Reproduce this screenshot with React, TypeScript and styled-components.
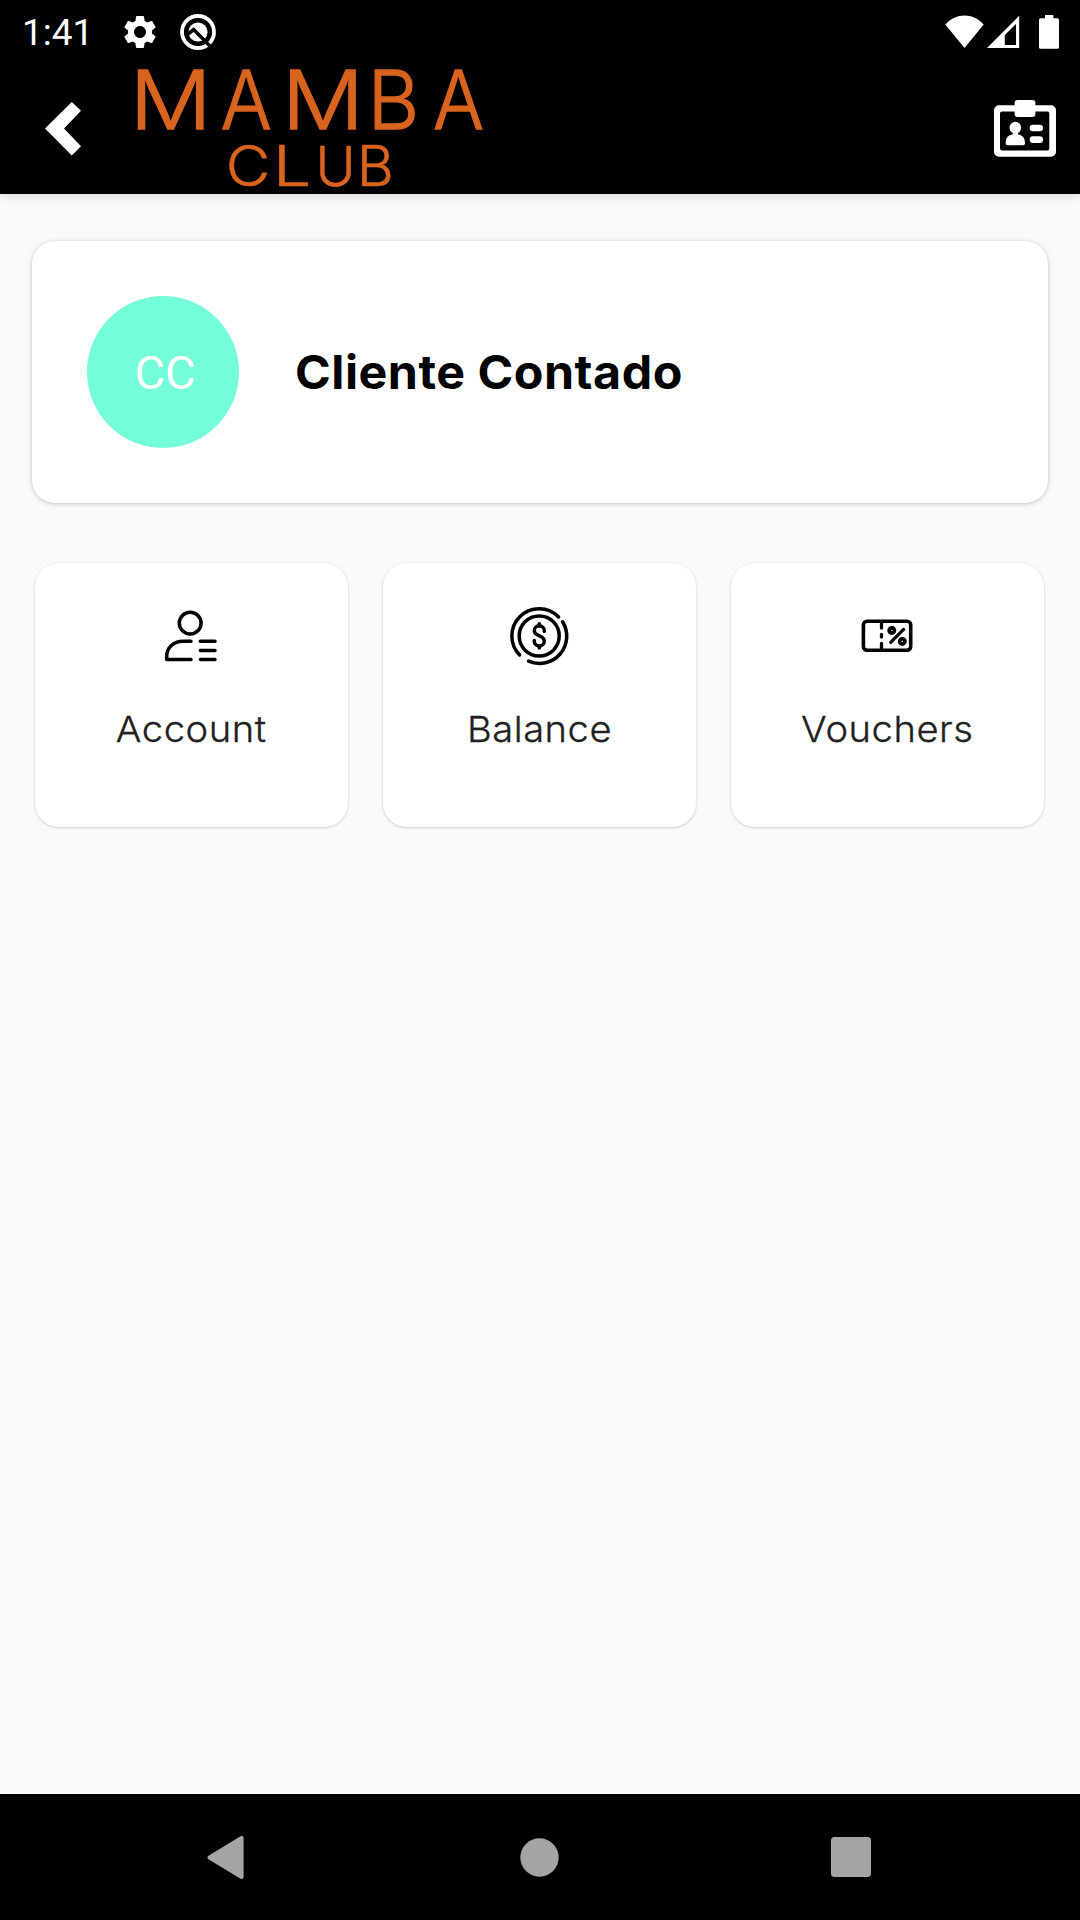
import React from 'react';
import styled, { createGlobalStyle } from 'styled-components';
import { MdSettings } from 'react-icons/md';

const GlobalStyle = createGlobalStyle`
  *, *::before, *::after { box-sizing: border-box; }
  body { margin: 0; background: #fafafa; }
  svg { display: block; flex: none; }
`;

const Screen = styled.div`
  display: flex;
  flex-direction: column;
  width: 1080px;
  height: 1920px;
  overflow: hidden;
  background: #fafafa;
  font-family: Inter, "Open Sans", sans-serif;
`;

const StatusBar = styled.header`
  display: flex;
  align-items: center;
  justify-content: space-between;
  height: 63px;
  padding: 0 21px 0 22px;
  background: #000;
  color: #fff;
`;

const StatusGroup = styled.div<{ $gap: number }>`
  display: flex;
  align-items: center;
  gap: ${(p) => p.$gap}px;
`;

const BatterySlot = styled.div`
  padding-left: 16px;
`;

const Clock = styled.span`
  width: 79px;
  margin-top: 2px;
  font: 400 37px/44px Roboto, sans-serif;
  white-space: nowrap;
`;

const AppBar = styled.nav`
  display: flex;
  align-items: flex-start;
  height: 131px;
  padding: 0 24px 0 45px;
  background: #000;
  box-shadow: 0 2px 9px rgba(0, 0, 0, 0.15);
`;

const BarButton = styled.button<{ $top: number }>`
  display: flex;
  margin: ${(p) => p.$top}px 0 0;
  padding: 0;
  border: 0;
  background: none;
`;

const LogoBox = styled.div`
  flex: 1;
  padding-left: 35px;
`;

const LogoSvg = styled.svg`
  overflow: visible;
  fill: #d9641e;
  stroke: #d9641e;
`;

const LogoText = styled.text<{ $size: number; $stroke: number }>`
  font-family: Inter, sans-serif;
  font-weight: 300;
  font-size: ${(p) => p.$size}px;
  stroke-width: ${(p) => p.$stroke}px;
`;

const Content = styled.main`
  display: flex;
  flex: 1;
  flex-direction: column;
  gap: 60px;
  padding: 47px 32px 0;
`;

const ProfileCard = styled.section`
  display: flex;
  align-items: center;
  gap: 56px;
  height: 262px;
  padding: 0 55px;
  border-radius: 23px;
  background: #fff;
  box-shadow: 0 1px 5px rgba(0, 0, 0, 0.2), 0 0 3px rgba(0, 0, 0, 0.06);
`;

const Avatar = styled.div`
  display: flex;
  align-items: center;
  justify-content: center;
  width: 152px;
  height: 152px;
  padding: 2px 0 0 4px;
  border-radius: 50%;
  background: #73fdd8;
  color: #fff;
  font: 400 47px/56px Roboto, sans-serif;
`;

const ClientName = styled.h1`
  margin: 0;
  color: #000;
  font-size: 47px;
  font-weight: 700;
  line-height: 56px;
  letter-spacing: 0.5px;
  white-space: nowrap;
  transform: scaleX(1.029);
  transform-origin: 0 50%;
`;

const Tiles = styled.div`
  display: grid;
  grid-template-columns: repeat(3, 1fr);
  gap: 35px;
  padding: 0 4px 0 3px;
`;

const Tile = styled.button`
  display: flex;
  flex-direction: column;
  align-items: center;
  height: 264px;
  padding: 32px 0 0;
  border: 0;
  border-radius: 24px;
  background: #fff;
  box-shadow: 0 1px 3px rgba(0, 0, 0, 0.17), 0 0 2px rgba(0, 0, 0, 0.05);
  font-family: inherit;
`;

const TileIcon = styled.div<{ $nudge: number }>`
  padding-right: ${(p) => p.$nudge}px;
`;

const TileLabel = styled.span`
  margin-top: 30px;
  color: #212121;
  font-size: 36px;
  font-weight: 300;
  line-height: 48px;
  letter-spacing: 0.5px;
  -webkit-text-stroke: 0.3px #212121;
  transform: scaleX(1.06);
`;

const NavBar = styled.footer`
  display: flex;
  align-items: center;
  justify-content: space-between;
  height: 126px;
  padding: 0 209px 0 207px;
  background: #000;
`;

const NavSlot = styled.div`
  padding-left: 4px;
`;

type LogoLetter = { ch: string; x: number; sx: number };

const mamba: LogoLetter[] = [
  { ch: 'M', x: 13.8, sx: 1.13 },
  { ch: 'A', x: 104.8, sx: 0.94 },
  { ch: 'M', x: 166, sx: 1.13 },
  { ch: 'B', x: 251.5, sx: 0.99 },
  { ch: 'A', x: 317, sx: 0.94 },
];

const club: LogoLetter[] = [
  { ch: 'C', x: 109.8, sx: 1.1 },
  { ch: 'L', x: 157, sx: 1.22 },
  { ch: 'U', x: 199.4, sx: 0.98 },
  { ch: 'B', x: 241, sx: 1.02 },
];

const Logo = () => (
  <LogoSvg width="400" height="131" viewBox="0 0 400 131" aria-label="Mamba Club">
    {mamba.map((l, i) => (
      <LogoText key={i} $size={80.5} $stroke={1.3} transform={`translate(${l.x} 65.6) scale(${l.sx} 1)`}>
        {l.ch}
      </LogoText>
    ))}
    {club.map((l, i) => (
      <LogoText key={i} $size={55.5} $stroke={0.6} transform={`translate(${l.x} 123.4) scale(${l.sx} 1)`}>
        {l.ch}
      </LogoText>
    ))}
  </LogoSvg>
);

const AssistIcon = () => (
  <svg width="38" height="38" viewBox="-19 -19 38 38" fill="none">
    <circle r="16" stroke="#fff" strokeWidth="3.8" />
    <circle r="9.6" fill="#fff" />
    <path d="M-10 2 L-4.4 -2.4 L12 14" stroke="#000" strokeWidth="3.6" />
  </svg>
);

const WifiIcon = () => (
  <svg width="39" height="34" viewBox="0 0 39 34">
    <path d="M19.5 33 L0.3 9.6 C11 -2.5 28 -2.5 38.7 9.6 Z" fill="#fff" />
  </svg>
);

const SignalIcon = () => (
  <svg width="33" height="34" viewBox="0 0 33 34">
    <path fillRule="evenodd" d="M0 33 L32.2 0.8 V33 Z M17.8 20 V30 H29 V9 Z" fill="#fff" />
  </svg>
);

const BatteryIcon = () => (
  <svg width="20" height="34" viewBox="0 0 20 34" fill="#fff">
    <rect x="6" y="0" width="8.4" height="5" />
    <rect x="0" y="3.3" width="20" height="30.5" rx="1.6" />
  </svg>
);

const BackIcon = () => (
  <svg width="36" height="54" viewBox="0 0 36 54">
    <path d="M26.8 0 L36 8.8 L19 26.5 L36 44.3 L26.8 53.5 L0 26.5 Z" fill="#fff" />
  </svg>
);

const BadgeIcon = () => (
  <svg width="62" height="57" viewBox="0 0 62 57" fill="#fff">
    <path
      fillRule="evenodd"
      d="M5 5.2 H57 a5 5 0 0 1 5 5 V51.7 a5 5 0 0 1 -5 5 H5 a5 5 0 0 1 -5 -5 V10.2 a5 5 0 0 1 5 -5 Z M8 11.5 a2 2 0 0 0 -2 2 V48.4 a2 2 0 0 0 2 2 H53.3 a2 2 0 0 0 2 -2 V13.5 a2 2 0 0 0 -2 -2 Z"
    />
    <rect x="20.6" y="0" width="20.8" height="17" rx="3" />
    <ellipse cx="21.3" cy="27.8" rx="5.8" ry="6" />
    <path d="M18.8 31 H23.8 V34.2 Q31 35.4 31 42.5 V43.5 Q31 45.3 29.3 45.3 H13.3 Q11.6 45.3 11.6 43.5 V42.5 Q11.6 35.4 18.8 34.2 Z" />
    <rect x="35.7" y="24.7" width="13.3" height="6.5" rx="3.2" />
    <rect x="35.7" y="36.2" width="13.3" height="6.7" rx="3.2" />
  </svg>
);

const AccountIcon = () => (
  <svg width="80" height="80" viewBox="0 0 80 80" fill="none" stroke="#000" strokeWidth="3.5" strokeLinecap="round" strokeLinejoin="round">
    <circle cx="40.2" cy="28.1" r="10.9" />
    <path d="M41 46.3 H33 C23 46.3 16.7 53 16.7 61 V64.4 H41" />
    <path d="M50.3 46.3 H65 M50.3 55.4 H65 M50.3 64.4 H65" />
  </svg>
);

const BalanceIcon = () => (
  <svg width="80" height="80" viewBox="0 0 80 80" fill="none" stroke="#000" strokeWidth="3.5" strokeLinecap="round">
    <circle cx="39.2" cy="41" r="20" />
    <path d="M58.6 22 A27.2 27.2 0 1 0 19.6 60" />
    <path d="M62.6 26.8 A27.2 27.2 0 0 1 28.6 66.1" />
    <path d="M44.3 36.4 V35.6 A5 4.8 0 0 0 34.3 35.6 C34.3 38.6 36 39.6 39.3 40.9 C42.6 42.2 44.3 43.4 44.3 46.2 A5 4.8 0 0 1 34.3 46.2 V45.6" />
    <path d="M39.3 28.8 V31 M39.3 51 V53" />
  </svg>
);

const VoucherIcon = () => (
  <svg width="80" height="80" viewBox="0 0 80 80" fill="none" stroke="#000" strokeWidth="3.6" strokeLinecap="round">
    <rect x="16.4" y="26.2" width="47.3" height="29" rx="3.6" />
    <path d="M34.5 27 V33 M34.5 39.3 V42 M34.5 48.5 V55" strokeWidth="3.3" />
    <circle cx="44.8" cy="35.4" r="2.6" strokeWidth="3.8" />
    <circle cx="55.3" cy="46.4" r="2.6" strokeWidth="3.8" />
    <path d="M56.6 34.4 L43.7 47.4" strokeWidth="3.2" />
  </svg>
);

const tiles = [
  { label: 'Account', icon: <AccountIcon />, nudge: 3 },
  { label: 'Balance', icon: <BalanceIcon />, nudge: 0 },
  { label: 'Vouchers', icon: <VoucherIcon />, nudge: 2 },
];

export default function App() {
  return (
    <Screen>
      <GlobalStyle />
      <StatusBar>
        <StatusGroup $gap={19}>
          <Clock>1:41</Clock>
          <MdSettings size={40} />
          <AssistIcon />
        </StatusGroup>
        <StatusGroup $gap={3}>
          <WifiIcon />
          <SignalIcon />
          <BatterySlot>
            <BatteryIcon />
          </BatterySlot>
        </StatusGroup>
      </StatusBar>
      <AppBar>
        <BarButton $top={39} aria-label="Back">
          <BackIcon />
        </BarButton>
        <LogoBox>
          <Logo />
        </LogoBox>
        <BarButton $top={37} aria-label="Member card">
          <BadgeIcon />
        </BarButton>
      </AppBar>
      <Content>
        <ProfileCard>
          <Avatar>CC</Avatar>
          <ClientName>Cliente Contado</ClientName>
        </ProfileCard>
        <Tiles>
          {tiles.map((t) => (
            <Tile key={t.label}>
              <TileIcon $nudge={t.nudge}>{t.icon}</TileIcon>
              <TileLabel>{t.label}</TileLabel>
            </Tile>
          ))}
        </Tiles>
      </Content>
      <NavBar>
        <svg width="37" height="43" viewBox="0 0 37 43">
          <path d="M34.6 2 V41 L2.5 21.5 Z" fill="#a5a5a5" stroke="#a5a5a5" strokeWidth="4" strokeLinejoin="round" />
        </svg>
        <NavSlot>
          <svg width="39" height="39" viewBox="0 0 39 39">
            <circle cx="19.5" cy="19.5" r="19.2" fill="#a5a5a5" />
          </svg>
        </NavSlot>
        <svg width="40" height="40" viewBox="0 0 40 40">
          <rect width="40" height="40" rx="3.5" fill="#a5a5a5" />
        </svg>
      </NavBar>
    </Screen>
  );
}
